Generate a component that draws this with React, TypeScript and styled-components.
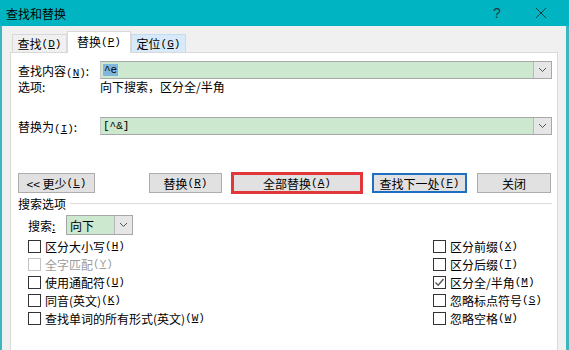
import React from 'react';
import styled, { createGlobalStyle, css } from 'styled-components';

const GlobalStyle = createGlobalStyle`
  html, body {
    margin: 0;
    padding: 0;
    background: #ffffff;
  }
`;

const TEAL = '#00b4c2';
const FIELD_GREEN = '#cce8cf';

const Window = styled.div`
  width: 569px;
  height: 350px;
  overflow: hidden;
  display: flex;
  flex-direction: column;
  font-family: 'Noto Sans CJK SC', sans-serif;
  font-size: 12px;
  color: #000;
`;

const TitleBar = styled.div`
  height: 26px;
  flex-shrink: 0;
  display: flex;
  align-items: center;
  padding-left: 6px;
  background: ${TEAL};
`;

const Title = styled.div`
  flex: 1;
  font-size: 12px;
`;

const TitleButton = styled.div`
  width: 44px;
  display: flex;
  align-items: center;
  justify-content: center;
  color: #1d3b3e;
  font-family: 'Liberation Sans', sans-serif;
  font-size: 14px;
`;

const Body = styled.div`
  flex: 1;
  display: flex;
  flex-direction: column;
  background: #f0f0f0;
  border-left: 2px solid #3cb7bf;
  border-right: 3px solid #3cb7bf;
  padding: 0 8px;
`;

const TabStrip = styled.div`
  height: 26px;
  flex-shrink: 0;
  display: flex;
  align-items: flex-end;
  padding-left: 2px;
  position: relative;
  z-index: 1;
`;

const Tab = styled.div<{ w: number; active?: boolean; hover?: boolean }>`
  width: ${(p) => p.w}px;
  box-sizing: border-box;
  height: 18px;
  display: flex;
  align-items: center;
  justify-content: center;
  border: 1px solid #d9d9d9;
  border-bottom: none;
  white-space: nowrap;
  background: ${(p) => (p.hover ? '#d8eaf9' : '#f0f0f0')};
  ${(p) =>
    p.hover &&
    css`
      border-color: #c5dcef;
    `}
  ${(p) =>
    p.active &&
    css`
      height: 22px;
      margin-bottom: -1px;
      padding-bottom: 2px;
      background: #fff;
    `}
`;

const Panel = styled.div`
  flex: 1;
  display: flex;
  flex-direction: column;
  background: #fff;
  border: 1px solid #d9d9d9;
  border-bottom: none;
  padding: 8px 5px 0 7px;
`;

const Mn = styled.span`
  font-family: 'Liberation Mono', monospace;
  font-size: 11px;
`;

const Key = styled.span`
  text-decoration: underline;
`;

const FieldRow = styled.div<{ gap?: number }>`
  display: grid;
  grid-template-columns: 82px 1fr;
  align-items: center;
  height: 18px;
  margin-top: ${(p) => p.gap || 0}px;
`;

const Label = styled.div`
  white-space: nowrap;
`;

const Combo = styled.div<{ width?: number }>`
  height: 18px;
  box-sizing: border-box;
  display: flex;
  align-items: stretch;
  background: ${FIELD_GREEN};
  border: 1px solid #a8a8a8;
  border-left-color: #c9c9c9;
  ${(p) => p.width && `width: ${p.width}px;`}
`;

const ComboText = styled.div`
  flex: 1;
  display: flex;
  align-items: center;
  padding-left: 2px;
  font-family: 'Liberation Mono', monospace;
  font-size: 11px;
`;

const Selected = styled.span`
  background: #7eb6de;
  padding: 0 1px;
`;

const DropButton = styled.div`
  width: 17px;
  display: flex;
  align-items: center;
  justify-content: center;
  background: #e6e6e6;
  border-left: 1px solid #b8b8b8;
`;

const InfoRow = styled.div`
  display: grid;
  grid-template-columns: 82px 1fr;
  height: 14px;
  line-height: 14px;
  margin-top: 1px;
`;

const ButtonRow = styled.div`
  display: flex;
  align-items: center;
  height: 20px;
  margin-top: 38px;
  padding-right: 1px;
`;

const Spacer = styled.div`
  flex: 1;
`;

const Button = styled.div<{ w: number; mark?: 'red' | 'blue'; ml?: number }>`
  width: ${(p) => p.w}px;
  height: 20px;
  box-sizing: border-box;
  display: flex;
  align-items: center;
  justify-content: center;
  background: #e1e1e1;
  border: 1px solid #adadad;
  margin-left: ${(p) => p.ml || 0}px;
  white-space: nowrap;
  ${(p) =>
    p.mark === 'red' &&
    css`
      border: 2px solid #e2363b;
      box-shadow: 0 0 0 1px #e2363b;
    `}
  ${(p) =>
    p.mark === 'blue' &&
    css`
      border: 2px solid #1c6fc2;
    `}
`;

const GroupHeader = styled.div`
  display: flex;
  align-items: center;
  height: 14px;
  margin-top: 3px;
`;

const GroupLine = styled.div`
  flex: 1;
  margin-left: 4px;
  border-top: 1px solid #dcdcdc;
`;

const SearchRow = styled.div`
  display: flex;
  align-items: center;
  height: 20px;
  margin-top: 5px;
  padding-left: 10px;
`;

const SearchLabel = styled.div`
  width: 38px;
`;

const SelectBox = styled(Combo)`
  height: 20px;
  border-color: #a8a8a8;
`;

const SelectText = styled.div`
  flex: 1;
  display: flex;
  align-items: center;
  padding-left: 3px;
`;

const CheckGrid = styled.div`
  display: grid;
  grid-template-columns: 405px 1fr;
  grid-auto-rows: 18px;
  margin-top: 2px;
  padding-left: 10px;
`;

const CheckItem = styled.div<{ disabled?: boolean }>`
  display: flex;
  align-items: center;
  white-space: nowrap;
  color: ${(p) => (p.disabled ? '#9c9c9c' : '#000')};
`;

const Box = styled.div<{ disabled?: boolean }>`
  width: 13px;
  height: 13px;
  box-sizing: border-box;
  border: 1px solid ${(p) => (p.disabled ? '#c4c4c4' : '#333')};
  background: #fff;
  margin-right: 4px;
  display: flex;
  align-items: center;
  justify-content: center;
`;

const Chevron = () => (
  <svg width="9" height="6" viewBox="0 0 9 6">
    <path d="M1 1 L4.5 4.5 L8 1" fill="none" stroke="#555" strokeWidth="1" />
  </svg>
);

const Tick = () => (
  <svg width="11" height="11" viewBox="0 0 11 11">
    <path d="M1.5 5.5 L4.2 8.2 L9.5 2" fill="none" stroke="#555" strokeWidth="1.4" />
  </svg>
);

const M = ({ k }: { k: string }) => (
  <Mn>
    (<Key>{k}</Key>)
  </Mn>
);

interface CheckProps {
  children?: any;
  checked?: boolean;
  disabled?: boolean;
}

const Check = (props: CheckProps) => (
  <CheckItem disabled={props.disabled}>
    <Box disabled={props.disabled}>{props.checked && <Tick />}</Box>
    {props.children}
  </CheckItem>
);

const App = () => {
  return (
    <Window>
      <GlobalStyle />
      <TitleBar>
        <Title>查找和替换</Title>
        <TitleButton>?</TitleButton>
        <TitleButton style={{ marginRight: 6 }}>
          <svg width="12" height="12" viewBox="0 0 12 12">
            <path d="M1 1 L11 11 M11 1 L1 11" stroke="#1d3b3e" strokeWidth="1" />
          </svg>
        </TitleButton>
      </TitleBar>
      <Body>
        <TabStrip>
          <Tab w={55}>
            查找<M k='D' />
          </Tab>
          <Tab w={64} active>
            替换<M k='P' />
          </Tab>
          <Tab w={55} hover>
            定位<M k='G' />
          </Tab>
        </TabStrip>
        <Panel>
          <FieldRow>
            <Label>
              查找内容<M k='N' />:
            </Label>
            <Combo>
              <ComboText>
                <Selected>^e</Selected>
              </ComboText>
              <DropButton>
                <Chevron />
              </DropButton>
            </Combo>
          </FieldRow>
          <InfoRow>
            <Label>选项:</Label>
            <div>向下搜索，区分全/半角</div>
          </InfoRow>
          <FieldRow gap={23}>
            <Label>
              替换为<M k='I' />:
            </Label>
            <Combo>
              <ComboText>[^&amp;]</ComboText>
              <DropButton>
                <Chevron />
              </DropButton>
            </Combo>
          </FieldRow>
          <ButtonRow>
            <Button w={77}>
              &lt;&lt; 更少<M k='L' />
            </Button>
            <Spacer />
            <Button w={73}>
              替换<M k='R' />
            </Button>
            <Button w={130} mark='red' ml={10}>
              全部替换<M k='A' />
            </Button>
            <Button w={95} mark='blue' ml={10}>
              查找下一处<M k='F' />
            </Button>
            <Button w={74} ml={10}>
              关闭
            </Button>
          </ButtonRow>
          <GroupHeader>
            搜索选项
            <GroupLine />
          </GroupHeader>
          <SearchRow>
            <SearchLabel>
              搜索<Key>:</Key>
            </SearchLabel>
            <SelectBox width={67}>
              <SelectText>向下</SelectText>
              <DropButton>
                <Chevron />
              </DropButton>
            </SelectBox>
          </SearchRow>
          <CheckGrid>
            <Check>
              区分大小写<M k='H' />
            </Check>
            <Check>
              区分前缀<M k='X' />
            </Check>
            <Check disabled>
              全字匹配<M k='Y' />
            </Check>
            <Check>
              区分后缀<M k='T' />
            </Check>
            <Check>
              使用通配符<M k='U' />
            </Check>
            <Check checked>
              区分全/半角<M k='M' />
            </Check>
            <Check>
              同音(英文)<M k='K' />
            </Check>
            <Check>
              忽略标点符号<M k='S' />
            </Check>
            <Check>
              查找单词的所有形式(英文)<M k='W' />
            </Check>
            <Check>
              忽略空格<M k='W' />
            </Check>
          </CheckGrid>
        </Panel>
      </Body>
    </Window>
  );
};

export default App;
